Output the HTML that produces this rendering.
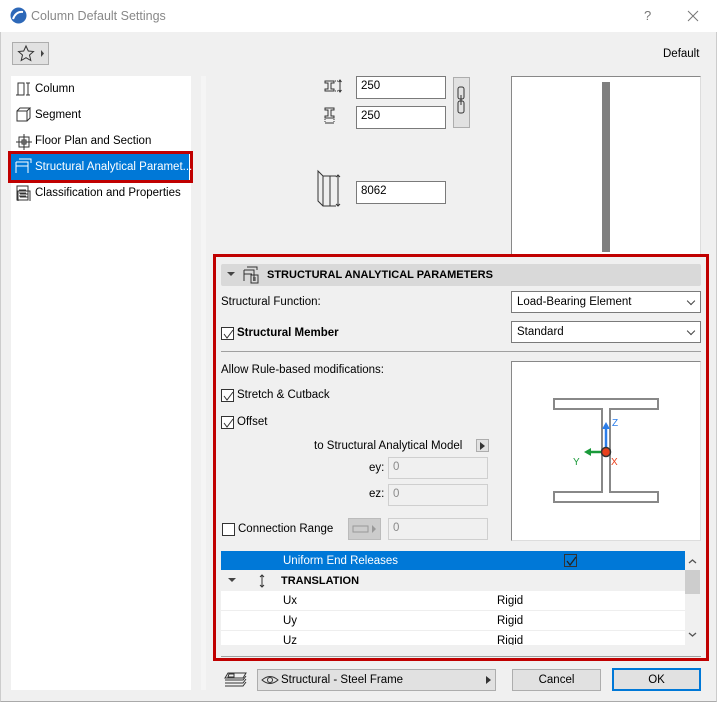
<!DOCTYPE html>
<html><head><meta charset="utf-8"><style>
*{box-sizing:border-box;margin:0;padding:0}
body{width:717px;height:702px;background:#f0f0f0;font-family:"Liberation Sans",sans-serif;font-size:11.5px;color:#000;position:relative;overflow:hidden}
.a{position:absolute}
.inp{position:absolute;background:#fff;border:1px solid #7a7a7a;padding:3px 0 0 4px;font-size:11.5px;height:23px}
.dis{position:absolute;background:#f0f0f0;border:1px solid #cfcfcf;padding:3px 0 0 4px;color:#8a8a8a;height:22px}
.cb{position:absolute;width:13px;height:13px;border:1px solid #333;background:#fff}
.cb svg{position:absolute;left:0;top:0}
.dd{position:absolute;background:#fff;border:1px solid #7a7a7a;padding:4px 0 0 5px;height:22px}
.dd:after{content:"";position:absolute;right:6px;top:6px;width:5px;height:5px;border-right:1px solid #444;border-bottom:1px solid #444;transform:rotate(45deg)}
.it{position:absolute;left:35px;font-size:11.5px}
</style></head><body>
<div class="a" style="left:0;top:0;width:717px;height:32px;background:#fff"></div>
<svg class="a" style="left:10px;top:7px" width="17" height="17"><circle cx="8.5" cy="8.5" r="8" fill="#2d68b8"/><path d="M3 12 Q6 4 13 5" stroke="#fff" stroke-width="2" fill="none"/></svg>
<div class="a" style="left:31px;top:9px;font-size:12.5px;color:#888">Column Default Settings</div>
<div class="a" style="left:644px;top:8px;font-size:13px;color:#777">?</div>
<svg class="a" style="left:687px;top:10px" width="12" height="12"><path d="M1 1L11 11M11 1L1 11" stroke="#777" stroke-width="1"/></svg>
<div class="a" style="left:0;top:32px;width:717px;height:670px;border-left:1px solid #ccc;border-right:1px solid #ccc;border-bottom:1px solid #aaa"></div>
<div class="a" style="left:12px;top:42px;width:37px;height:23px;border:1px solid #adadad;background:#e1e1e1"></div>
<svg class="a" style="left:17px;top:44px" width="30" height="19"><path d="M9 2L11.3 7 16.5 7.5 12.5 11 13.8 16.5 9 13.7 4.2 16.5 5.5 11 1.5 7.5 6.7 7Z" fill="none" stroke="#333"/><path d="M24 6L27 9.5 24 13Z" fill="#444"/></svg>
<div class="a" style="left:663px;top:48px">Default</div>
<div class="a" style="left:11px;top:76px;width:180px;height:614px;background:#fff"></div>
<div class="a" style="left:201px;top:76px;width:5px;height:614px;background:#f5f5f5"></div>
<svg class="a" style="left:15px;top:81px" width="18" height="120" fill="none" stroke="#333"><path d="M3 2h6v12H3zM1 14h7M11 2h4M13 2v12M11 14h4"/><path d="M2 30h10v10H2zM2 30l3-3h10l-3 3M15 27v10l-3 3"/><path d="M4 56h10v10H4zM9 53v16M1 61h16M7 59h4v4H7z"/><path d="M3 192h12v14H3zM5 195h8M5 198h8M5 201h8" transform="translate(0,-82)"/></svg>
<div class="it" style="top:83px">Column</div>
<div class="it" style="top:109px">Segment</div>
<div class="it" style="top:135px">Floor Plan and Section</div>
<div class="a" style="left:8px;top:151px;width:185px;height:32px;border:3px solid #c00000"></div>
<div class="a" style="left:11px;top:154px;width:178px;height:26px;background:#0078d7"></div>
<svg class="a" style="left:14px;top:158px" width="18" height="18" fill="none" stroke="#fff"><path d="M2 4h12v11M2 4v11M2 8h12M5 1h12v4"/></svg>
<div class="it" style="top:161px;color:#fff">Structural Analytical Paramet...</div>
<svg class="a" style="left:16px;top:185px" width="14" height="16" fill="none" stroke="#333"><path d="M1 1h11v14H1zM3 5h7M3 8h7M3 11h7"/></svg>
<div class="it" style="top:187px">Classification and Properties</div>

<svg class="a" style="left:323px;top:78px" width="28" height="50" fill="none" stroke="#333"><path d="M2 3h9v2H8v6h3v2H2v-2h3V5H2z"/><path d="M12 3h3M12 13h3" stroke-dasharray="1 1"/><path d="M17 2v12M15.5 4L17 2 18.5 4M15.5 12L17 14 18.5 12"/><path d="M2 30h9v2H8v6h3v2H2v-2h3v-6H2z"/><path d="M2 41v4M11 41v4" stroke-dasharray="1 1"/><path d="M2 45h9"/></svg>
<div class="inp" style="left:356px;top:76px;width:90px">250</div>
<div class="inp" style="left:356px;top:106px;width:90px">250</div>
<div class="a" style="left:453px;top:77px;width:17px;height:51px;border:1px solid #adadad;background:#e1e1e1"></div>
<svg class="a" style="left:456px;top:86px" width="11" height="30" fill="none" stroke="#333"><rect x="2" y="1" width="6" height="12" rx="2"/><rect x="2" y="15" width="6" height="12" rx="2"/><path d="M5 9v10"/></svg>
<svg class="a" style="left:316px;top:169px" width="34" height="38" fill="none" stroke="#333"><path d="M2 2l5 5h7v30H7L2 32z" fill="#eee"/><path d="M7 7v30M14 7h6M14 37h6" stroke-dasharray="0"/><path d="M22 6v31M20 8l2-2 2 2M20 35l2 2 2-2"/></svg>
<div class="inp" style="left:356px;top:181px;width:90px">8062</div>
<div class="a" style="left:511px;top:76px;width:190px;height:180px;background:#fff;border:1px solid #888;border-right-color:#ddd;border-bottom:none"></div>
<div class="a" style="left:602px;top:82px;width:8px;height:170px;background:#7f7f7f"></div>

<div class="a" style="left:213px;top:254px;width:496px;height:407px;border:3px solid #c00000"></div>
<div class="a" style="left:221px;top:264px;width:480px;height:22px;background:#d9d9d9;border-radius:2px"></div>
<svg class="a" style="left:226px;top:266px" width="40" height="18" fill="none" stroke="#333"><path d="M1 6l4 4 4-4z" fill="#444" stroke="none"/><path d="M18 4h10v11M18 4v11M18 8h8M21 1h10v3M25 9h7v8h-7zM27 12h3M27 14h3"/></svg>
<div class="a" style="left:267px;top:269px;font-weight:bold;font-size:11px">STRUCTURAL ANALYTICAL PARAMETERS</div>
<div class="a" style="left:221px;top:296px">Structural Function:</div>
<div class="dd" style="left:511px;top:291px;width:190px">Load-Bearing Element</div>
<div class="cb" style="left:221px;top:327px"><svg width="13" height="13"><path d="M2 6l3 4 6-8" stroke="#333" fill="none"/></svg></div>
<div class="a" style="left:237px;top:327px;font-weight:bold">Structural Member</div>
<div class="dd" style="left:511px;top:321px;width:190px">Standard</div>
<div class="a" style="left:221px;top:351px;width:480px;height:1px;background:#a0a0a0"></div>
<div class="a" style="left:221px;top:364px">Allow Rule-based modifications:</div>
<div class="cb" style="left:221px;top:389px"><svg width="13" height="13"><path d="M2 6l3 4 6-8" stroke="#333" fill="none"/></svg></div>
<div class="a" style="left:237px;top:389px">Stretch &amp; Cutback</div>
<div class="cb" style="left:221px;top:416px"><svg width="13" height="13"><path d="M2 6l3 4 6-8" stroke="#333" fill="none"/></svg></div>
<div class="a" style="left:237px;top:416px">Offset</div>
<div class="a" style="left:314px;top:440px">to Structural Analytical Model</div>
<div class="a" style="left:476px;top:439px;width:13px;height:13px;border:1px solid #adadad;background:#e1e1e1"></div>
<svg class="a" style="left:480px;top:442px" width="6" height="8"><path d="M0 0l5 4-5 4z" fill="#333"/></svg>
<div class="a" style="left:369px;top:462px">ey:</div>
<div class="dis" style="left:388px;top:457px;width:100px">0</div>
<div class="a" style="left:369px;top:488px">ez:</div>
<div class="dis" style="left:388px;top:484px;width:100px">0</div>
<div class="cb" style="left:222px;top:523px"></div>
<div class="a" style="left:238px;top:523px">Connection Range</div>
<div class="a" style="left:348px;top:518px;width:33px;height:22px;background:#ccc;border:1px solid #bbb"></div>
<svg class="a" style="left:352px;top:524px" width="26" height="10" fill="none" stroke="#999"><path d="M1 2h15v6H1z"/><path d="M20 1l4 4-4 4z" fill="#999" stroke="none"/></svg>
<div class="dis" style="left:388px;top:518px;width:100px">0</div>
<div class="a" style="left:511px;top:361px;width:190px;height:180px;background:#fff;border:1px solid #888;border-right-color:#ddd;border-bottom-color:#ddd"></div>
<svg class="a" style="left:511px;top:361px" width="190" height="180"><g fill="none" stroke="#888" stroke-width="2"><path d="M43 38h104v10H99v83h48v10H43v-10h48V48H43z"/></g><path d="M95 87V66" stroke="#2b7de9" stroke-width="2.5"/><path d="M91 68l4-7 4 7z" fill="#2b7de9"/><text x="101" y="65" font-size="10" fill="#2b7de9" font-family="Liberation Sans">Z</text><path d="M94 91H78" stroke="#1a9a3a" stroke-width="2.5"/><path d="M80 87l-7 4 7 4z" fill="#1a9a3a"/><text x="62" y="104" font-size="10" fill="#1a9a3a" font-family="Liberation Sans">Y</text><circle cx="95" cy="91" r="4.5" fill="#e8401c" stroke="#333" stroke-width="1.5"/><text x="100" y="104" font-size="10" fill="#e8401c" font-family="Liberation Sans">X</text></svg>

<div class="a" style="left:221px;top:551px;width:464px;height:19px;background:#0078d7"></div>
<div class="a" style="left:283px;top:555px;color:#fff">Uniform End Releases</div>
<div class="a" style="left:564px;top:554px;width:13px;height:13px;border:1px solid #333;background:#0078d7"><svg width="13" height="13" style="position:absolute;left:0;top:0"><path d="M2 6l3 4 6-8" stroke="#222" stroke-width="1.3" fill="none"/></svg></div>
<div class="a" style="left:221px;top:570px;width:464px;height:21px;background:#f0f0f0"></div>
<svg class="a" style="left:226px;top:572px" width="45" height="17" fill="none" stroke="#333"><path d="M2 6l4 4 4-4z" fill="#444" stroke="none"/><path d="M36 3v12M34 5l2-2 2 2M34 13l2 2 2-2"/></svg>
<div class="a" style="left:281px;top:575px;font-weight:bold;font-size:11px">TRANSLATION</div>
<div class="a" style="left:221px;top:591px;width:464px;height:54px;background:#fff"></div>
<div class="a" style="left:221px;top:610px;width:464px;height:1px;background:#eee"></div>
<div class="a" style="left:221px;top:630px;width:464px;height:1px;background:#eee"></div>
<div class="a" style="left:221px;top:591px;width:464px;height:54px;overflow:hidden">
<div class="a" style="left:62px;top:4px">Ux</div><div class="a" style="left:276px;top:4px">Rigid</div>
<div class="a" style="left:62px;top:24px">Uy</div><div class="a" style="left:276px;top:24px">Rigid</div>
<div class="a" style="left:62px;top:44px">Uz</div><div class="a" style="left:276px;top:44px">Rigid</div>
</div>
<div class="a" style="left:685px;top:570px;width:15px;height:24px;background:#cdcdcd"></div>
<svg class="a" style="left:687px;top:556px" width="11" height="88" fill="none" stroke="#555" stroke-width="1.3"><path d="M2 7l3.5-3 3.5 3M2 77l3.5 3 3.5-3"/></svg>
<div class="a" style="left:221px;top:656px;width:480px;height:1px;background:#a0a0a0"></div>

<svg class="a" style="left:222px;top:671px" width="28" height="18" fill="none" stroke="#333"><path d="M6 2h18l-3 5H3z M7 3h5v3H6z"/><path d="M3 9h18l3-4M3 12h18l3-4M3 15h18l3-4"/></svg>
<div class="a" style="left:257px;top:669px;width:239px;height:22px;border:1px solid #adadad;background:#e1e1e1"></div>
<svg class="a" style="left:261px;top:674px" width="18" height="12" fill="none" stroke="#333"><path d="M1 6Q9-1 17 6Q9 13 1 6z"/><circle cx="9" cy="6" r="2.5"/></svg>
<div class="a" style="left:281px;top:674px">Structural - Steel Frame</div>
<svg class="a" style="left:486px;top:676px" width="6" height="8"><path d="M0 0l5 4-5 4z" fill="#333"/></svg>
<div class="a" style="left:512px;top:669px;width:89px;height:22px;border:1px solid #adadad;background:#e1e1e1;text-align:center;padding-top:4px">Cancel</div>
<div class="a" style="left:612px;top:668px;width:89px;height:23px;border:2px solid #0078d7;background:#e1e1e1;text-align:center;padding-top:4px">OK</div>
</body></html>
